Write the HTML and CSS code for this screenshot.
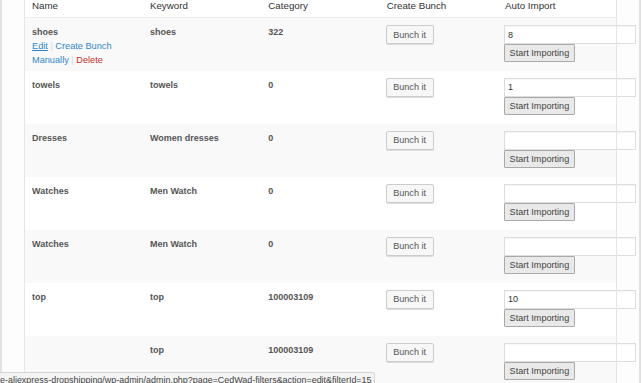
FILE: index.html
```html
<!DOCTYPE html>
<html>
<head>
<meta charset="utf-8">
<link rel="stylesheet" href="styles.css">
</head>
<body>
<div class="page">
  <div class="content">
    <table class="list">
      <thead>
        <tr><th>Name</th><th>Keyword</th><th>Category</th><th>Create Bunch</th><th>Auto Import</th></tr>
      </thead>
      <tbody>
        <tr class="alt">
          <td><strong>shoes</strong>
            <div class="actions"><a class="hover" href="#">Edit</a><span class="sep"> | </span><a href="#">Create Bunch Manually</a><span class="sep"> | </span><a class="del" href="#">Delete</a></div>
          </td>
          <td><strong>shoes</strong></td>
          <td><strong>322</strong></td>
          <td><button class="bunch">Bunch it</button></td>
          <td><input class="num" type="text" value="8"><button class="start">Start Importing</button></td>
        </tr>
        <tr>
          <td><strong>towels</strong></td>
          <td><strong>towels</strong></td>
          <td><strong>0</strong></td>
          <td><button class="bunch">Bunch it</button></td>
          <td><input class="num" type="text" value="1"><button class="start">Start Importing</button></td>
        </tr>
        <tr class="alt">
          <td><strong>Dresses</strong></td>
          <td><strong>Women dresses</strong></td>
          <td><strong>0</strong></td>
          <td><button class="bunch">Bunch it</button></td>
          <td><input class="num" type="text" value=""><button class="start">Start Importing</button></td>
        </tr>
        <tr>
          <td><strong>Watches</strong></td>
          <td><strong>Men Watch</strong></td>
          <td><strong>0</strong></td>
          <td><button class="bunch">Bunch it</button></td>
          <td><input class="num" type="text" value=""><button class="start">Start Importing</button></td>
        </tr>
        <tr class="alt">
          <td><strong>Watches</strong></td>
          <td><strong>Men Watch</strong></td>
          <td><strong>0</strong></td>
          <td><button class="bunch">Bunch it</button></td>
          <td><input class="num" type="text" value=""><button class="start">Start Importing</button></td>
        </tr>
        <tr>
          <td><strong>top</strong></td>
          <td><strong>top</strong></td>
          <td><strong>100003109</strong></td>
          <td><button class="bunch">Bunch it</button></td>
          <td><input class="num" type="text" value="10"><button class="start">Start Importing</button></td>
        </tr>
        <tr class="alt">
          <td></td>
          <td><strong>top</strong></td>
          <td><strong>100003109</strong></td>
          <td><button class="bunch">Bunch it</button></td>
          <td><input class="num" type="text" value=""><button class="start">Start Importing</button></td>
        </tr>
      </tbody>
    </table>
  </div>
</div>
<div class="status">e-aliexpress-dropshipping/wp-admin/admin.php?page=CedWad-filters&amp;action=edit&amp;filterId=15</div>
</body>
</html>
```

FILE: styles.css
```css
html, body {
  margin: 0;
  padding: 0;
  height: 383px;
  overflow: hidden;
  background: #fff;
  font-family: "Liberation Sans", Arial, sans-serif;
}

.page {
  display: flex;
  height: 383px;
  border-left: 2px solid #e2e2e2;
  width: 637px;
  border-right: 2px solid #e2e2e2;
  background: #fdfdfd;
}

.content {
  padding-left: 22px;
}

.list {
  width: 593px;
  table-layout: fixed;
  border-collapse: collapse;
  border: 1px solid #e5e5e5;
  border-top: none;
  background: #fff;
}

.list th {
  text-align: left;
  font-weight: normal;
  font-size: 9.75px;
  color: #333;
  line-height: 12px;
  height: 17px;
  padding: 0 6px 5px 7px;
  border-bottom: 1px solid #ededed;
  vertical-align: top;
  box-sizing: border-box;
}

.list td {
  vertical-align: top;
  padding: 7px 6px 0 7px;
  height: 53px;
  box-sizing: border-box;
  font-size: 9px;
  line-height: 14px;
  color: #555;
}

.list tr.alt td {
  background: #f9f9f9;
}

.list td strong {
  font-weight: bold;
  color: #555;
}

.actions {
  font-size: 9.2px;
  line-height: 14px;
  color: #ccc;
}

.actions a {
  color: #2f86c9;
  text-decoration: none;
}

.actions a.hover {
  text-decoration: underline;
}

.actions a.del {
  color: #c62d2d;
}

.actions .sep {
  color: #d6d6d6;
}

.bunch {
  display: block;
  margin: 0 0 0 -1px;
  height: 19px;
  padding: 0 6.5px;
  font-family: "Liberation Sans", Arial, sans-serif;
  font-size: 9.1px;
  color: #555;
  background: #f7f7f7;
  border: 1px solid #cccccc;
  border-radius: 2px;
  box-shadow: 0 1px 0 #dcdcdc;
}

.num {
  display: block;
  box-sizing: border-box;
  width: 132px;
  height: 19px;
  margin: 0 0 0 -1px;
  padding: 0 3px;
  font-family: "Liberation Sans", Arial, sans-serif;
  font-size: 9px;
  color: #333;
  background: #fff;
  border: 1px solid #dddddd;
  box-shadow: inset 0 1px 1px rgba(0,0,0,0.04);
  outline: none;
}

.start {
  display: block;
  margin: 0 0 0 -1px;
  height: 18px;
  padding: 0 4.5px;
  font-family: "Liberation Sans", Arial, sans-serif;
  font-size: 9.1px;
  color: #444;
  background: #e9e9e9;
  border: 1px solid #a9a9a9;
  border-radius: 1px;
}

.status {
  position: fixed;
  left: 0;
  bottom: -6px;
  height: 15px;
  padding: 0 2px 0 0;
  font-size: 8.95px;
  line-height: 14px;
  color: #444;
  background: #f4f4f4;
  border: 1px solid #d4d4d4;
  border-left: none;
  border-top-right-radius: 3px;
  white-space: nowrap;
}
```
